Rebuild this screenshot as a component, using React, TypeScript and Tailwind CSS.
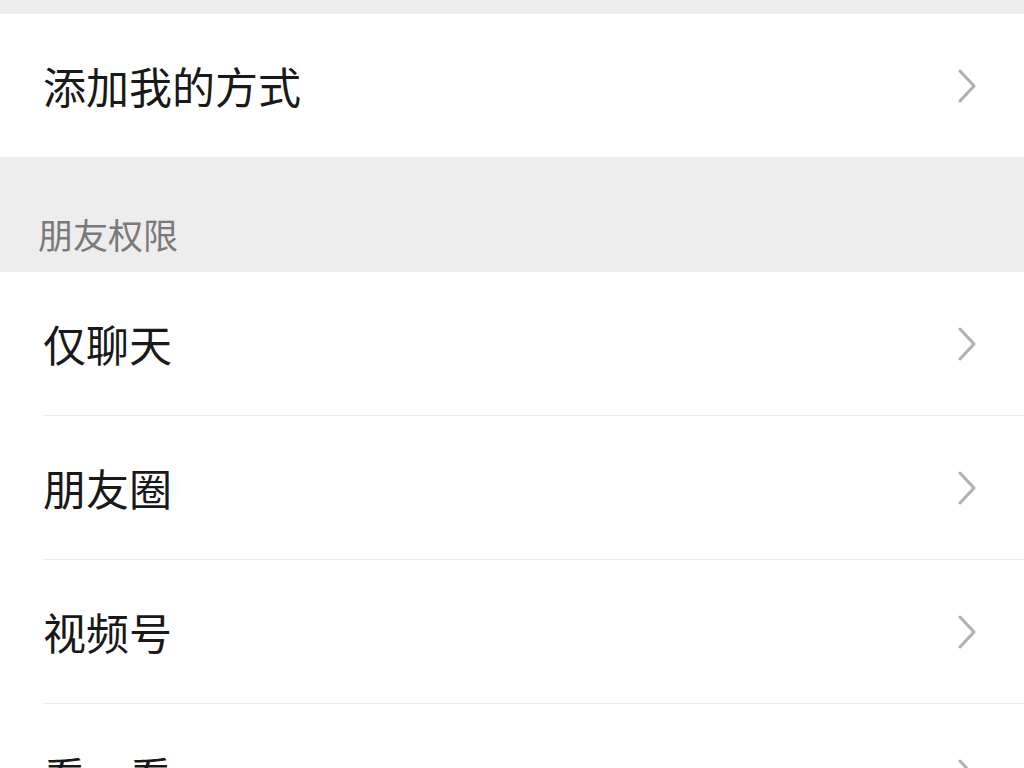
import React from 'react'

const font = { fontFamily: '"Noto Sans CJK SC", "Noto Sans", sans-serif' }

function Chevron() {
  return (
    <svg width="20" height="34" viewBox="0 0 20 34" fill="none" className="shrink-0">
      <polyline points="3,2 17,17 3,32" stroke="#afafaf" strokeWidth="3" strokeLinecap="round" strokeLinejoin="round" />
    </svg>
  )
}

function Row({ label, divider = true }: { label: string; divider?: boolean }) {
  return (
    <div className="bg-white pl-[43px]">
      <div
        className={`flex items-center pr-[47px] ${divider ? 'h-[144px] border-b border-[#ececec]' : 'h-[143px]'}`}
      >
        <span className="flex-1 text-[43px] leading-none text-[#191919]">{label}</span>
        <Chevron />
      </div>
    </div>
  )
}

export default function App() {
  return (
    <div className="h-[768px] w-[1024px] overflow-hidden bg-[#ededed]" style={font}>
      <div className="h-[14px]" />
      <Row label="添加我的方式" divider={false} />
      <div className="flex h-[115px] items-end pb-[21px] pl-[38px]">
        <span className="text-[35px] leading-none text-[#7a7a7a]">朋友权限</span>
      </div>
      <Row label="仅聊天" />
      <Row label="朋友圈" />
      <Row label="视频号" />
      <Row label="看一看" divider={false} />
    </div>
  )
}
